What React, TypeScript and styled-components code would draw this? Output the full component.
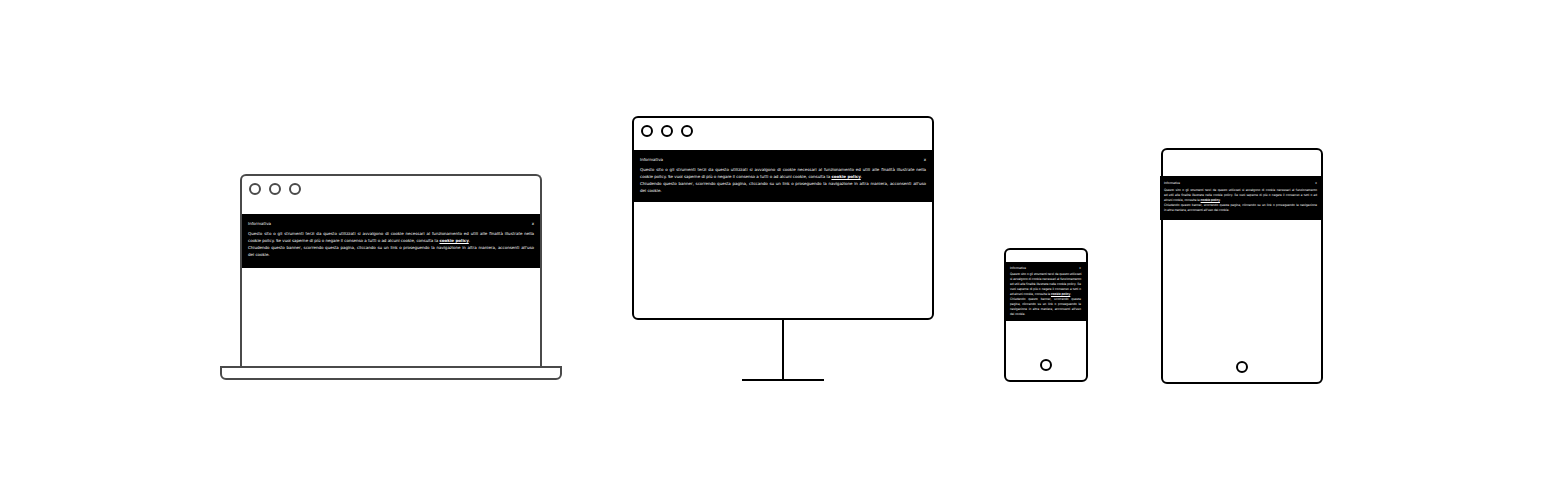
import React from "react";
import styled, { createGlobalStyle } from "styled-components";

const GlobalStyle = createGlobalStyle`
  *, *::before, *::after { box-sizing: border-box; }
  body { margin: 0; background: #fff; }
`;

const INK = "#000";
const GRAPHITE = "#4a4a4a";

const Page = styled.main`
  min-height: 100vh;
  display: flex;
  flex-wrap: wrap;
  justify-content: center;
  align-items: flex-end;
  align-content: center;
  gap: 70px;
`;

const Handhelds = styled.div`
  display: flex;
  align-items: flex-end;
  gap: 72px;
`;

const Device = styled.div<{ $width: number; $ground?: number }>`
  width: ${(p) => p.$width}px;
  padding-bottom: ${(p) => p.$ground ?? 0}px;
  display: flex;
  flex-direction: column;
  align-items: center;
`;

const Frame = styled.section<{ $width: number; $height: number; $color?: string; $open?: boolean }>`
  width: ${(p) => p.$width}px;
  min-height: ${(p) => p.$height}px;
  display: flex;
  flex-direction: column;
  border: 2px solid ${(p) => p.$color ?? INK};
  border-radius: ${(p) => (p.$open ? "6px 6px 0 0" : "6px")};
  ${(p) => p.$open && "border-bottom: 0;"}
`;

const TopBar = styled.div<{ $height: number }>`
  height: ${(p) => p.$height}px;
  flex: none;
  display: flex;
  align-items: flex-start;
  gap: 8px;
  padding: 7px 7px 0;
`;

const Ring = styled.span<{ $color?: string }>`
  width: 12px;
  height: 12px;
  border: 2px solid ${(p) => p.$color ?? INK};
  border-radius: 50%;
`;

const HomeRing = styled(Ring)`
  margin: auto auto 9px;
`;

const LaptopBase = styled.div`
  width: 100%;
  height: 14px;
  border: 2px solid ${GRAPHITE};
  border-radius: 0 0 6px 6px;
`;

const Stem = styled.div`
  width: 2px;
  height: 59px;
  background: ${INK};
`;

const Foot = styled.div`
  width: 82px;
  height: 2px;
  background: ${INK};
`;

type Size = "large" | "small";

const Notice = styled.div<{ $size: Size; $padding: string; $gap: number; $bleed?: boolean }>`
  display: flex;
  flex-direction: column;
  gap: ${(p) => p.$gap}px;
  padding: ${(p) => p.$padding};
  ${(p) => p.$bleed && "margin-left: -3px;"}
  background: #000;
  color: #fff;
  font-family: ${(p) => (p.$size === "large" ? '"DejaVu Sans"' : "Inter")}, "Liberation Sans", sans-serif;
  font-size: ${(p) => (p.$size === "large" ? 4 : 3)}px;
  line-height: ${(p) => (p.$size === "large" ? 7 : 5)}px;
  text-rendering: geometricPrecision;
`;

const NoticeHead = styled.div`
  display: flex;
  justify-content: space-between;
`;

const NoticeTitle = styled.h2`
  margin: 0;
  font: inherit;
`;

const CloseButton = styled.button`
  margin: 0;
  padding: 0;
  border: 0;
  background: none;
  color: inherit;
  font: inherit;
  cursor: pointer;
`;

const NoticeText = styled.p`
  margin: 0;
`;

const Line = styled.span<{ $full?: boolean }>`
  display: block;
  white-space: nowrap;
  text-align: ${(p) => (p.$full ? "justify" : "left")};
  text-align-last: ${(p) => (p.$full ? "justify" : "left")};
`;

const PolicyLink = styled.a`
  color: inherit;
  font-weight: 700;
  text-decoration: underline;
`;

/* A trailing "|" marks a line that ends a paragraph and stays ragged. */
const wideLines = [
  "Questo sito o gli strumenti terzi da questo utilizzati si avvalgono di cookie necessari al funzionamento ed utili alle finalità illustrate nella",
  "cookie policy. Se vuoi saperne di più o negare il consenso a tutti o ad alcuni cookie, consulta la @|",
  "Chiudendo questo banner, scorrendo questa pagina, cliccando su un link o proseguendo la navigazione in altra maniera, acconsenti all'uso",
  "dei cookie.|",
];

const tabletLines = [
  "Questo sito o gli strumenti terzi da questo utilizzati si avvalgono di cookie necessari al funzionamento",
  "ed utili alle finalità illustrate nella cookie policy. Se vuoi saperne di più o negare il consenso a tutti o ad",
  "alcuni cookie, consulta la @|",
  "Chiudendo questo banner, scorrendo questa pagina, cliccando su un link o proseguendo la navigazione",
  "in altra maniera, acconsenti all'uso dei cookie.|",
];

const phoneLines = [
  "Questo sito o gli strumenti terzi da questo utilizzati",
  "si avvalgono di cookie necessari al funzionamento",
  "ed utili alle finalità illustrate nella cookie policy. Se",
  "vuoi saperne di più o negare il consenso a tutti o",
  "ad alcuni cookie, consulta la @|",
  "Chiudendo questo banner, scorrendo questa",
  "pagina, cliccando su un link o proseguendo la",
  "navigazione in altra maniera, acconsenti all'uso",
  "dei cookie.|",
];

interface CookieNoticeProps {
  lines: string[];
  size: Size;
  padding: string;
  gap: number;
  bleed?: boolean;
}

function CookieNotice({ lines, size, padding, gap, bleed }: CookieNoticeProps) {
  return (
    <Notice $size={size} $padding={padding} $gap={gap} $bleed={bleed}>
      <NoticeHead>
        <NoticeTitle>Informativa</NoticeTitle>
        <CloseButton type="button">x</CloseButton>
      </NoticeHead>
      <NoticeText>
        {lines.map((raw) => {
          const full = !raw.endsWith("|");
          const text = raw.replace("|", "");
          const hasLink = text.includes("@");
          return (
            <Line key={raw} $full={full}>
              {text.replace("@", "")}
              {hasLink && (
                <>
                  <PolicyLink href="#cookie-policy">cookie policy</PolicyLink>.
                </>
              )}
            </Line>
          );
        })}
      </NoticeText>
    </Notice>
  );
}

function WindowBar({ height, color }: { height: number; color?: string }) {
  return (
    <TopBar $height={height}>
      <Ring $color={color} />
      <Ring $color={color} />
      <Ring $color={color} />
    </TopBar>
  );
}

export default function App() {
  return (
    <>
      <GlobalStyle />
      <Page>
        <Device $width={342} $ground={4}>
          <Frame $width={302} $height={192} $color={GRAPHITE} $open>
            <WindowBar height={38} color={GRAPHITE} />
            <CookieNotice lines={wideLines} size="large" padding="6px 6px 10px" gap={3} />
          </Frame>
          <LaptopBase />
        </Device>

        <Device $width={302} $ground={3}>
          <Frame $width={302} $height={204}>
            <WindowBar height={32} />
            <CookieNotice lines={wideLines} size="large" padding="6px 6px 8px" gap={3} />
          </Frame>
          <Stem />
          <Foot />
        </Device>

        <Handhelds>
          <Device $width={84} $ground={2}>
            <Frame $width={84} $height={134}>
              <TopBar $height={12} />
              <CookieNotice lines={phoneLines} size="small" padding="4px 5px 4px 4px" gap={1} />
              <HomeRing />
            </Frame>
          </Device>

          <Device $width={164}>
            <Frame $width={162} $height={236}>
              <TopBar $height={26} />
              <CookieNotice lines={tabletLines} size="small" padding="5px 4px 7px" gap={2} bleed />
              <HomeRing />
            </Frame>
          </Device>
        </Handhelds>
      </Page>
    </>
  );
}
